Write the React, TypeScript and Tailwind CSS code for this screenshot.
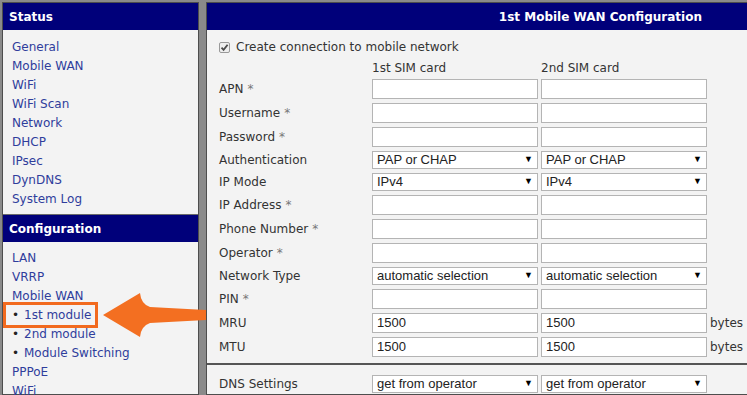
import React from 'react';

const statusLinks = ['General', 'Mobile WAN', 'WiFi', 'WiFi Scan', 'Network', 'DHCP', 'IPsec', 'DynDNS', 'System Log'];

const configLinks = [
  { t: 'LAN' },
  { t: 'VRRP' },
  { t: 'Mobile WAN' },
  { t: '1st module', sub: true },
  { t: '2nd module', sub: true },
  { t: 'Module Switching', sub: true },
  { t: 'PPPoE' },
  { t: 'WiFi' },
];

type Row = { label: string; req?: boolean; kind: 'input' | 'select'; v1?: string; v2?: string; unit?: string };

const rows: Row[] = [
  { label: 'APN', req: true, kind: 'input' },
  { label: 'Username', req: true, kind: 'input' },
  { label: 'Password', req: true, kind: 'input' },
  { label: 'Authentication', kind: 'select', v1: 'PAP or CHAP', v2: 'PAP or CHAP' },
  { label: 'IP Mode', kind: 'select', v1: 'IPv4', v2: 'IPv4' },
  { label: 'IP Address', req: true, kind: 'input' },
  { label: 'Phone Number', req: true, kind: 'input' },
  { label: 'Operator', req: true, kind: 'input' },
  { label: 'Network Type', kind: 'select', v1: 'automatic selection', v2: 'automatic selection' },
  { label: 'PIN', req: true, kind: 'input' },
  { label: 'MRU', kind: 'input', v1: '1500', v2: '1500', unit: 'bytes' },
  { label: 'MTU', kind: 'input', v1: '1500', v2: '1500', unit: 'bytes' },
];

const TextBox = ({ value }: { value?: string }) => (
  <div className="h-[20px] w-[166px] border border-[#b4b4b4] bg-white px-[4px] flex items-center font-['Liberation_Sans',Arial,sans-serif] text-[13px] text-[#222]">
    {value}
  </div>
);

const SelectBox = ({ value }: { value?: string }) => (
  <div className="h-[18px] w-[166px] border border-[#b4b4b4] bg-white pl-[4px] pr-[4px] flex items-center justify-between font-['Liberation_Sans',Arial,sans-serif] text-[13px] text-[#222]">
    <span>{value}</span>
    <span className="text-[9px] text-black">▼</span>
  </div>
);

const Label = ({ row }: { row: Row }) => (
  <div className="flex items-center text-[12px] text-[#333]">
    {row.label}
    {row.req && <span className="ml-[4px] text-[#777]">*</span>}
  </div>
);

export default function App() {
  return (
    <div className="relative h-[395px] w-[747px] overflow-hidden bg-[#8a8a8a] font-['DejaVu_Sans',Verdana,sans-serif]">
      <div className="flex pl-[2px] pt-[2px] gap-[7px] h-full">
        {/* Left menu */}
        <div className="w-[197px] shrink-0 border border-[#4d4d4d] bg-[#f3f3f3]">
          <div className="h-[27px] bg-[#00007a] flex items-center pl-[6px] text-[12px] font-bold text-white">Status</div>
          <div className="pt-[7px] pb-[6px] pl-[9px]">
            {statusLinks.map((l) => (
              <div key={l} className="h-[19px] flex items-center text-[12px] text-[#2f3d9c]">{l}</div>
            ))}
          </div>
          <div className="border-t border-[#6a6a6a] h-[28px] bg-[#00007a] flex items-center pl-[6px] text-[12px] font-bold text-white">Configuration</div>
          <div className="pt-[6px] pl-[9px]">
            {configLinks.map((l) => (
              <div key={l.t} className="h-[19px] flex items-center text-[12px] text-[#2f3d9c]">
                {l.sub && <span className="w-[12px] text-[#222]">•</span>}
                {l.t}
              </div>
            ))}
          </div>
        </div>

        {/* Main panel */}
        <div className="flex-1 border border-r-0 border-[#4d4d4d] bg-[#f3f3f3]">
          <div className="h-[27px] bg-[#00007a] flex items-center justify-end pr-[45px] text-[12px] font-bold text-white">
            1st Mobile WAN Configuration
          </div>
          <div className="pt-[7px] pl-[12px]">
            <div className="h-[20px] flex items-center gap-[6px] text-[12px] text-[#333]">
              <span className="w-[11px] h-[11px] border border-[#999] rounded-[2px] bg-[#eee] flex items-center justify-center">
                <svg width="9" height="9" viewBox="0 0 9 9">
                  <path d="M1.5 4.6 L3.6 6.8 L7.6 1.8" fill="none" stroke="#4a4a4a" strokeWidth="1.8" />
                </svg>
              </span>
              Create connection to mobile network
            </div>
            <div className="grid grid-cols-[150px_166px_166px_auto] gap-x-[3px] gap-y-[4px] mt-[3px] items-center">
              <div />
              <div className="h-[15px] flex items-center text-[12px] text-[#333]">1st SIM card</div>
              <div className="h-[15px] flex items-center text-[12px] text-[#333]">2nd SIM card</div>
              <div />
              {rows.map((r) => (
                <React.Fragment key={r.label}>
                  <Label row={r} />
                  {r.kind === 'input' ? <TextBox value={r.v1} /> : <SelectBox value={r.v1} />}
                  {r.kind === 'input' ? <TextBox value={r.v2} /> : <SelectBox value={r.v2} />}
                  <div className="text-[12px] text-[#333]">{r.unit}</div>
                </React.Fragment>
              ))}
            </div>
          </div>
          <div className="mt-[6px] border-t-2 border-[#555] pt-[10px] pl-[12px]">
            <div className="grid grid-cols-[150px_166px_166px_auto] gap-x-[3px] items-center">
              <div className="text-[12px] text-[#333]">DNS Settings</div>
              <SelectBox value="get from operator" />
              <SelectBox value="get from operator" />
              <div />
            </div>
          </div>
        </div>
      </div>

      {/* Highlight box and arrow */}
      <div className="absolute left-[3px] top-[302px] w-[95px] h-[26px] border-[3px] border-[#f26a1e]" />
      <svg className="absolute left-[100px] top-[290px]" width="110" height="50" viewBox="0 0 110 50">
        <path
          d="M3 25 L40 3 Q41 14 50 17 L106 20 L106 30 L50 33 Q41 36 40 47 Z"
          fill="#f36f21"
        />
      </svg>
    </div>
  );
}
